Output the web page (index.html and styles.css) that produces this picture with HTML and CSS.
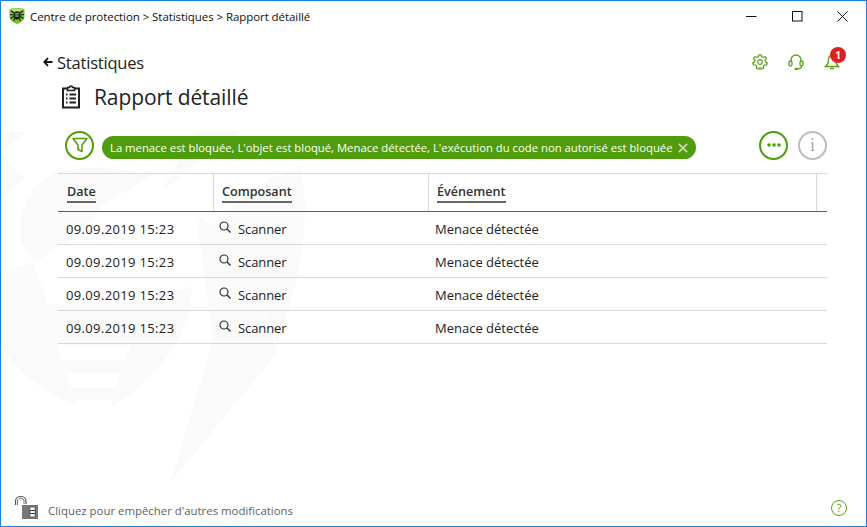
FILE: index.html
```html
<!DOCTYPE html>
<html lang="fr">
<head>
<meta charset="utf-8">
<title>Rapport détaillé</title>
<link rel="stylesheet" href="styles.css">
</head>
<body>
<div class="window">
  <svg class="watermark" viewBox="0 0 865 525" aria-hidden="true">
    <path d="M4 131L26 131L4 147Z"/>
    <path d="M0 153L25 178L0 196Z"/>
    <path d="M19 239C17 205 30 180 60 170C85 164 120 166 152 174L100 205L89 225L33 262Z"/>
    <path d="M0 271L32 262L47 303L118 303L192 285C188 335 160 375 110 407L111 399L75 399L76 406C40 390 15 370 0 343Z"/>
    <path class="cut" d="M56 344H129L125 359H61ZM65 372H120L116 387H70Z"/>
    <path d="M195 215L238 235L276 352L169 482L212 339Z"/>
    <path d="M197 130L240 130L160 190Z"/>
    <path d="M222 215C250 190 275 170 300 165C310 220 300 280 276 340Z"/>
  </svg>
  <header class="titlebar">
    <svg class="logo" viewBox="0 0 16 16" aria-hidden="true">
      <path d="M.5 1C5 -.3 11 -.3 15.500 1V8C15.500 12 12 14.500 8 16C4 14.500 .5 12 .5 8Z" fill="#74c32a"/>
      <path d="M1.500 1.500C5 .5 11 .5 14.500 1.500V3H1.500Z" fill="#b4e07a"/>
      <path d="M2 2.500L5.500 5.500M14 2.500L10.500 5.500M1 6.500L5 7M15 6.500L11 7M1.500 10.500L5 8.500M14.500 10.500L11 8.500M4.500 13L6 10M11.500 13L10 10" stroke="#12200a" stroke-width="1.100" fill="none"/>
      <ellipse cx="8" cy="7.500" rx="3.200" ry="4" fill="#12200a"/>
      <path d="M6.200 5.800H9.800M6.300 8H9.700" stroke="#e6f3d2" stroke-width=".9"/>
    </svg>
    <span class="crumbs">Centre de protection &gt; Statistiques &gt; Rapport détaillé</span>
    <div class="winbtns">
      <svg viewBox="0 0 11 11"><path d="M0 5.500H10.500" stroke="#111" fill="none"/></svg>
      <svg viewBox="0 0 11 11"><rect x=".5" y=".5" width="9.500" height="9.500" stroke="#111" fill="none"/></svg>
      <svg viewBox="0 0 11 11"><path d="M.5 .5L10.500 10.500M10.500 .5L.5 10.500" stroke="#111" fill="none"/></svg>
    </div>
  </header>
  <div class="topbar">
    <a class="back"><svg viewBox="0 0 10 10" aria-hidden="true"><path d="M9.500 5H1.500M5 1.200L1.300 5L5 8.800" stroke="#111" stroke-width="1.800" fill="none"/></svg>Statistiques</a>
    <div class="tools">
      <svg viewBox="0 0 16 16" aria-hidden="true"><path d="M6.800 .8H9.200L9.700 2.800L11.300 3.500L13.100 2.500L14.500 4.500L13.100 6L13.300 7.900L15.300 8.800L14.500 11L12.500 11L11.300 12.400L11.600 14.400L9.300 15.200L8.100 13.600H7.900L6.700 15.200L4.400 14.400L4.700 12.400L3.500 11L1.500 11L.7 8.800L2.700 7.900L2.900 6L1.500 4.500L2.900 2.500L4.700 3.500L6.300 2.800Z" fill="none" stroke="#5aa315" stroke-width="1.200" stroke-linejoin="round"/><circle cx="8" cy="8" r="2.300" fill="none" stroke="#5aa315" stroke-width="1.200"/></svg>
      <svg viewBox="0 0 16 16" aria-hidden="true"><path d="M3 8V6A5 5 0 0 1 13 6V8" fill="none" stroke="#5aa315" stroke-width="1.300"/><rect x="1" y="7" width="3" height="5" rx="1.500" fill="none" stroke="#5aa315" stroke-width="1.300"/><rect x="12" y="7" width="3" height="5" rx="1.500" fill="none" stroke="#5aa315" stroke-width="1.300"/><path d="M13.500 12C13.500 14 12 14.800 9.500 14.800" fill="none" stroke="#5aa315" stroke-width="1.300"/><rect x="6.500" y="13.700" width="3.500" height="2.200" rx="1" fill="#5aa315"/></svg>
      <div class="bell">
        <svg viewBox="0 0 16 16" aria-hidden="true"><path d="M8 1.500C5.500 1.500 4.500 3.500 4.500 6C4.500 9 3.500 11 1.500 12.500H14.500C12.500 11 11.500 9 11.500 6C11.500 3.500 10.500 1.500 8 1.500ZM6 14.500H10" fill="none" stroke="#5aa315" stroke-width="1.300"/></svg>
        <span class="badge">1</span>
      </div>
    </div>
  </div>
  <div class="heading">
    <svg viewBox="0 0 20 24" aria-hidden="true"><path d="M6 3.500H2V22.500H18V3.500H14" fill="none" stroke="#222" stroke-width="2"/><path d="M6.500 5.500V2.500H8.500C8.500 .5 11.500 .5 11.500 2.500H13.500V5.500Z" fill="none" stroke="#222" stroke-width="1.600"/><path d="M5 9.500H6.500M8.500 9.500H15M5 13.500H6.500M8.500 13.500H15M5 17.500H6.500M8.500 17.500H15" stroke="#222" stroke-width="1.800" fill="none"/></svg>
    <h1>Rapport détaillé</h1>
  </div>
  <div class="filterbar">
    <span class="circle green"><svg viewBox="0 0 16 16" aria-hidden="true"><path d="M1 1.500H15L10 8V14.500L6 12.500V8Z" fill="none" stroke="#4f9d0c" stroke-width="1.500" stroke-linejoin="round"/></svg></span>
    <div class="pill"><span>La menace est bloquée, L'objet est bloqué, Menace détectée, L'exécution du code non autorisé est bloquée</span><svg viewBox="0 0 10 10" aria-hidden="true"><path d="M.8 .8L9.200 9.200M9.200 .8L.8 9.200" stroke="#c8d6b8" stroke-width="1.800" fill="none"/></svg></div>
    <span class="circle green dots"><svg viewBox="0 0 16 6" aria-hidden="true"><circle cx="3" cy="3" r="1.800" fill="#4f9d0c"/><circle cx="8" cy="3" r="1.800" fill="#4f9d0c"/><circle cx="13" cy="3" r="1.800" fill="#4f9d0c"/></svg></span>
    <span class="circle grey">i</span>
  </div>
  <div class="table">
    <div class="thead">
      <div class="th"><span>Date</span></div>
      <div class="th"><span>Composant</span></div>
      <div class="th"><span>Événement</span></div>
      <div class="th"></div>
    </div>
    <div class="row"><div class="when">09.09.2019 15:23</div><div class="comp"><svg viewBox="0 0 12 12" aria-hidden="true"><circle cx="5" cy="5" r="4" fill="none" stroke="#333" stroke-width="1.200"/><path d="M8 8L11.500 11.500" stroke="#333" stroke-width="1.400"/></svg>Scanner</div><div class="event">Menace détectée</div></div>
    <div class="row"><div class="when">09.09.2019 15:23</div><div class="comp"><svg viewBox="0 0 12 12" aria-hidden="true"><circle cx="5" cy="5" r="4" fill="none" stroke="#333" stroke-width="1.200"/><path d="M8 8L11.500 11.500" stroke="#333" stroke-width="1.400"/></svg>Scanner</div><div class="event">Menace détectée</div></div>
    <div class="row"><div class="when">09.09.2019 15:23</div><div class="comp"><svg viewBox="0 0 12 12" aria-hidden="true"><circle cx="5" cy="5" r="4" fill="none" stroke="#333" stroke-width="1.200"/><path d="M8 8L11.500 11.500" stroke="#333" stroke-width="1.400"/></svg>Scanner</div><div class="event">Menace détectée</div></div>
    <div class="row"><div class="when">09.09.2019 15:23</div><div class="comp"><svg viewBox="0 0 12 12" aria-hidden="true"><circle cx="5" cy="5" r="4" fill="none" stroke="#333" stroke-width="1.200"/><path d="M8 8L11.500 11.500" stroke="#333" stroke-width="1.400"/></svg>Scanner</div><div class="event">Menace détectée</div></div>
  </div>
  <footer class="footer">
    <svg class="lock" viewBox="0 0 24 24" aria-hidden="true"><path d="M1.500 10V6C1.500 0 12 0 12 6V9" fill="none" stroke="#555" stroke-width="1.200"/><path d="M3.500 10V6C3.500 2.500 10 2.500 10 6V9" fill="none" stroke="#777" stroke-width="1"/><rect x="8" y="10" width="16" height="14" fill="#777"/><rect x="16" y="12" width="5" height="10" fill="#fff" stroke="#333" stroke-width=".6"/><path d="M16 15.500H21M16 18.500H21" stroke="#444" stroke-width="1.100"/></svg>
    <span class="hint">Cliquez pour empêcher d'autres modifications</span>
    <span class="help">?</span>
  </footer>
</div>
</body>
</html>
```
FILE: styles.css
```css
* { box-sizing: border-box; }
html, body { margin: 0; height: 100%; background: #fff; }
body { font-family: "Open Sans", "Noto Sans", sans-serif; color: #222; overflow: hidden; }
.window {
  position: relative;
  width: 867px;
  height: 527px;
  display: flex;
  flex-direction: column;
  background: #fff;
  border: 1px solid #1583d8;
  overflow: hidden;
}
.watermark { position: absolute; left: 0; top: 0; width: 865px; height: 525px; fill: #fafafa; }
.watermark .cut { fill: #fff; }
.titlebar { position: relative; height: 30px; display: flex; align-items: center; padding-left: 8px; }
.logo { width: 16px; height: 16px; }
.crumbs { margin-left: 5px; font-size: 11.500px; color: #111; letter-spacing: -.07px; }
.winbtns { margin-left: auto; display: flex; gap: 34.500px; padding-right: 18px; }
.winbtns svg { width: 11px; height: 11px; display: block; }
.topbar { position: relative; display: flex; align-items: center; justify-content: space-between; height: 32px; margin-top: 16px; padding: 0 26px 0 42px; }
.back { display: flex; align-items: center; gap: 4px; margin-top: -2px; font-size: 16.500px; font-weight: 500; color: #222; letter-spacing: -.2px; }
.back svg { width: 10px; height: 10px; }
.tools { display: flex; align-items: center; gap: 20px; margin-top: -2px; }
.tools svg { width: 16px; height: 16px; display: block; }
.bell { position: relative; }
.badge { position: absolute; left: 6px; top: -7px; width: 16px; height: 16px; border-radius: 50%; background: #e02020; color: #fff; font-size: 10px; font-weight: 700; line-height: 16px; text-align: center; }
.heading { position: relative; display: flex; align-items: center; height: 35px; padding-left: 60px; }
.heading svg { width: 20px; height: 24px; }
.heading h1 { margin: 0 0 0 13px; font-size: 21px; font-weight: 500; color: #222; letter-spacing: -.1px; }
.filterbar { position: relative; display: flex; align-items: center; height: 32px; margin-top: 15px; padding-left: 64px; }
.circle { width: 29px; height: 29px; border-radius: 50%; display: flex; align-items: center; justify-content: center; flex: none; }
.circle.green { border: 2px solid #4f9d0c; }
.circle.green svg { width: 16px; height: 16px; }
.circle.dots svg { height: 6px; width: 16px; }
.circle.grey { border: 2px solid #bdbdbd; color: #aaa; font-family: "Liberation Serif", serif; font-size: 18px; margin-left: 10px; }
.pill { height: 23px; margin: 5px 63px 0 8px; padding: 0 8px 0 8px; width: 594px; border-radius: 12px; background: #4f9d0c; color: #fff; font-size: 11.300px; display: flex; align-items: center; justify-content: space-between; white-space: nowrap; }
.pill svg { width: 10px; height: 10px; flex: none; }
.table { position: relative; margin: 12px 0 0 57px; width: 769px; font-size: 13px; color: #222; }
.thead { display: grid; grid-template-columns: 156px 215px 388px 10px; height: 39px; border-top: 1px solid #d9d9d9; border-bottom: 1px solid #5f5f5f; }
.th { display: flex; align-items: center; padding: 1px 0 0 8px; border-right: 1px solid #d9d9d9; font-weight: 600; font-size: 12.600px; color: #333; }
.th:first-child { padding-left: 9px; }
.th:last-child { border-right: 0; }
.th span { border-bottom: 2px solid #666; line-height: 18px; }
.row { display: grid; grid-template-columns: 156px 215px 398px; height: 33px; align-items: center; padding-top: 1px; border-bottom: 1px solid #d9d9d9; }
.when { padding-left: 8px; letter-spacing: .35px; }
.comp { padding-left: 5px; display: flex; align-items: center; gap: 7px; letter-spacing: -.1px; }
.event { padding-left: 6px; }
.row svg { width: 12px; height: 12px; margin-top: -3px; }
.footer { position: relative; margin-top: auto; height: 33px; display: flex; align-items: center; padding: 0 19px 0 13px; }
.lock { width: 24px; height: 24px; margin-top: -5px; }
.hint { margin-left: 10px; margin-top: 1px; font-size: 11.400px; color: #5f5f5f; }
.help { margin-left: auto; margin-top: -4px; width: 16px; height: 16px; border: 1px solid #5aa315; border-radius: 50%; font-size: 11px; line-height: 14px; text-align: center; color: #5aa315; }
```
